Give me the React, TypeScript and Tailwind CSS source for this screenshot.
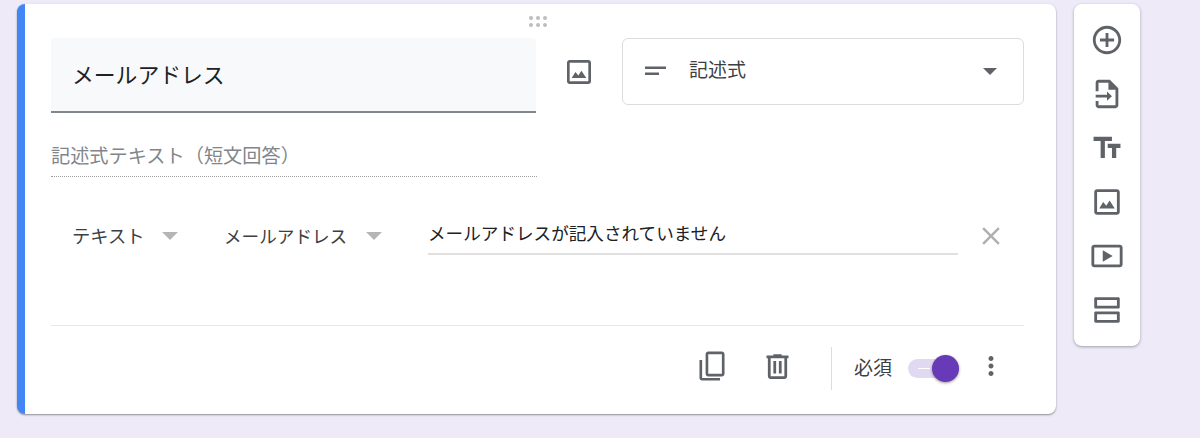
const font = "font-['Roboto','Noto_Sans_CJK_JP',sans-serif]";

const Icon = ({ d, className }: { d: string; className: string }) => (
	<svg viewBox="0 0 24 24" className={className} fill="#5f6368">
		<path d={d} />
	</svg>
);

const picture =
	"M19 5v14H5V5h14m0-2H5c-1.1 0-2 .9-2 2v14c0 1.1.9 2 2 2h14c1.1 0 2-.9 2-2V5c0-1.1-.9-2-2-2zM6.5 16.5l2.8-4.5 2.2 2.6 2.3-3.6 3.7 5.5z";

const tools = [
	"M13 7h-2v4H7v2h4v4h2v-4h4v-2h-4V7zm-1-5C6.48 2 2 6.48 2 12s4.48 10 10 10 10-4.48 10-10S17.52 2 12 2zm0 18c-4.41 0-8-3.59-8-8s3.59-8 8-8 8 3.59 8 8-3.59 8-8 8z",
	"M14 2H6c-1.1 0-2 .9-2 2v6h2V4h7v5h5v11H6v-3H4v3c0 1.1.9 2 2 2h12c1.1 0 2-.9 2-2V8l-6-6zM15.5 13.5L12 10.2v2.3H4v2h8v2.3z",
	"M2.5 4v3h5v12h3V7h5V4h-13zm19 5h-9v3h3v7h3v-7h3V9z",
	picture,
	"M21 4H3c-1.1 0-2 .9-2 2v12c0 1.1.9 2 2 2h18c1.1 0 2-.9 2-2V6c0-1.1-.9-2-2-2zm0 14H3V6h18v12zM9 8v8l7-4-7-4z",
	"M20 13H4c-.6 0-1 .4-1 1v6c0 .6.4 1 1 1h16c.6 0 1-.4 1-1v-6c0-.6-.4-1-1-1zm-1 6H5v-4h14v4zM20 3H4c-.6 0-1 .4-1 1v6c0 .6.4 1 1 1h16c.6 0 1-.4 1-1V4c0-.6-.4-1-1-1zm-1 6H5V5h14v4z",
];

const Caret = ({ className }: { className: string }) => (
	<span className={`h-0 w-0 border-x-[8px] border-t-[8px] border-x-transparent ${className}`} />
);

const Grip = () => (
	<div className="grid grid-cols-3 gap-x-[3px] gap-y-[3px] w-max mx-auto">
		{[0, 1, 2, 3, 4, 5].map((i) => (
			<span key={i} className="w-[4px] h-[4px] rounded-full bg-[#bdbdbd]" />
		))}
	</div>
);

const App = () => {
	return (
		<div className={`${font} h-[438px] w-[1200px] overflow-hidden bg-[#eeeaf8] pt-[4px] pl-[17px] flex items-start gap-[18px]`}>
			<div className="w-[1039px] h-[410px] shrink-0 bg-white rounded-lg border-l-[8px] border-[#4285f4] shadow-[0_1px_2px_rgba(60,64,67,0.55)] pl-[26px] pr-[32px] flex flex-col">
				<div className="h-[34px] pt-[12px]">
					<Grip />
				</div>

				<div className="flex items-start">
					<div className="w-[485px] h-[75px] bg-[#f8f9fa] rounded-t border-b-[2px] border-[#80868b] pl-[21px] pt-[3px] flex items-center text-[21.8px] text-[#202124]">
						メールアドレス
					</div>
					<div className="w-[86px] h-[67px] flex items-center justify-center">
						<Icon d={picture} className="w-[32px] h-[32px]" />
					</div>
					<div className="flex-1 h-[67px] border border-[#dadce0] rounded-md flex items-center pl-[19px] pr-[26px]">
						<svg viewBox="0 0 24 24" className="w-[24px] h-[24px]" fill="#5f6368">
							<path d="M3 6.5h21V9H3zM3 12.5h14V15H3z" />
						</svg>
						<span className="ml-[22px] text-[19px] text-[#3c4043] flex-1 pl-px">記述式</span>
						<span className="h-0 w-0 border-x-[7px] border-t-[7px] border-x-transparent border-t-[#5f6368]" />
					</div>
				</div>

				<div className="w-[486px] h-[42px] mt-[22px] pt-[8px] border-b border-dotted border-[#9e9e9e] text-[19.2px] leading-[28px] text-[#80868b]">
					記述式テキスト（短文回答）
				</div>

				<div className="flex items-center mt-[38px] h-[42px]">
					<span className="w-[111px] pl-[21px] pt-[2px] text-[18.3px] text-[#3c4043]">テキスト</span>
					<Caret className="border-t-[#b5b5b5]" />
					<span className="ml-[46px] w-[142px] pt-[2px] text-[17.6px] text-[#3c4043] whitespace-nowrap">メールアドレス</span>
					<Caret className="border-t-[#b5b5b5]" />
					<div className="ml-[46px] w-[530px] h-[38px] pt-[4px] border-b-[2px] border-[#e0e0e0] text-[17.6px] text-[#202124] whitespace-nowrap">
						メールアドレスが記入されていません
					</div>
					<svg viewBox="0 0 24 24" className="ml-[18px] w-[30px] h-[30px]" fill="#b0b0b0">
						<path d="M19 6.41L17.59 5 12 10.59 6.41 5 5 6.41 10.59 12 5 17.59 6.41 19 12 13.41 17.59 19 19 17.59 13.41 12z" />
					</svg>
				</div>

				<div className="mt-[68px] border-t border-[#e8e8e8] h-[66px] flex items-center justify-end pr-[18px] pt-[20px] text-[#3c4043]">
					<Icon
						d="M4.6 7.5H2.6V21c0 1.05.85 1.9 1.9 1.9H18v-1.9H4.6V7.5zM19.4 1.1H9.2c-1.1 0-2 .9-2 2v14.7c0 1.1.9 2 2 2h10.2c1.1 0 2-.9 2-2V3.1c0-1.1-.9-2-2-2zm0 16.7H9.2V3.1h10.2v14.7z"
						className="w-[32px] h-[32px] mb-[5px]"
					/>
					<Icon
						d="M15 4V3H9v1H4v2h1v13c0 1.1.9 2 2 2h10c1.1 0 2-.9 2-2V6h1V4h-5zm2 15H7V6h10v13zM9 8h2v9H9zm4 0h2v9h-2z"
						className="ml-[33px] w-[33px] h-[33px] mb-[5px]"
					/>
					<div className="ml-[37px] w-px h-[43px] bg-[#dadce0]" />
					<span className="ml-[22px] text-[19px] leading-none">必須</span>
					<div className="relative ml-[16px] w-[37px] h-[19px] rounded-full bg-[#e1d9f1] flex items-center pl-[10px]">
						<span className="w-[12px] h-px bg-white" />
						<span className="absolute -right-[14px] top-[-4px] w-[27px] h-[27px] rounded-full bg-[#673ab7] shadow-[0_1px_3px_rgba(0,0,0,0.4)]" />
					</div>
					<Icon
						d="M12 8c1.1 0 2-.9 2-2s-.9-2-2-2-2 .9-2 2 .9 2 2 2zm0 2c-1.1 0-2 .9-2 2s.9 2 2 2 2-.9 2-2-.9-2-2-2zm0 6c-1.1 0-2 .9-2 2s.9 2 2 2 2-.9 2-2-.9-2-2-2z"
						className="ml-[31px] w-[30px] h-[30px] mb-[6px]"
					/>
				</div>
			</div>

			<div className="w-[66px] h-[342px] shrink-0 bg-white rounded-lg shadow-[0_1px_3px_rgba(60,64,67,0.45)] flex flex-col items-center pt-[19px] gap-[20px]">
				{tools.map((d) => (
					<Icon key={d} d={d} className="w-[34px] h-[34px] shrink-0" />
				))}
			</div>
		</div>
	);
};

export default App;
